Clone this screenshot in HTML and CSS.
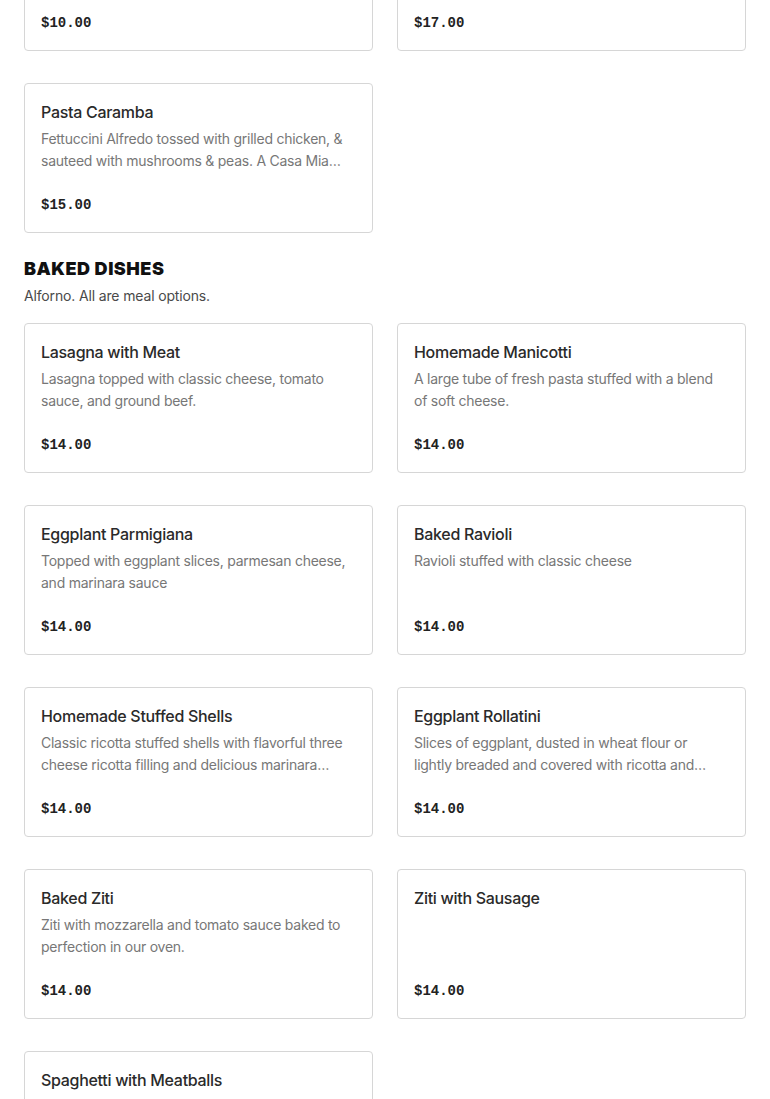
FILE: index.html
```html
<!DOCTYPE html>
<html>
<head>
<meta charset="utf-8">
<link rel="stylesheet" href="styles.css">
</head>
<body>
<main class="menu">
  <section class="section section-first">
    <div class="grid">
      <div class="card"><h3 class="title">Spaghetti Marinara</h3><p class="desc">Spaghetti tossed in our homemade marinara sauce.</p><div class="price">$10.00</div></div>
      <div class="card"><h3 class="title">Shrimp Scampi</h3><p class="desc">Shrimp sauteed in garlic, butter and white wine over linguini.</p><div class="price">$17.00</div></div>
      <div class="card"><h3 class="title">Pasta Caramba</h3><p class="desc">Fettuccini Alfredo tossed with grilled chicken, &amp; sauteed with mushrooms &amp; peas. A Casa Mia favorite served with garlic bread.</p><div class="price">$15.00</div></div>
    </div>
  </section>
  <section class="section">
    <h2 class="heading">BAKED DISHES</h2>
    <p class="caption">Alforno. All are meal options.</p>
    <div class="grid">
      <div class="card"><h3 class="title">Lasagna with Meat</h3><p class="desc">Lasagna topped with classic cheese, tomato sauce, and ground beef.</p><div class="price">$14.00</div></div>
      <div class="card"><h3 class="title">Homemade Manicotti</h3><p class="desc">A large tube of fresh pasta stuffed with a blend of soft cheese.</p><div class="price">$14.00</div></div>
      <div class="card"><h3 class="title">Eggplant Parmigiana</h3><p class="desc">Topped with eggplant slices, parmesan cheese, and marinara sauce</p><div class="price">$14.00</div></div>
      <div class="card"><h3 class="title">Baked Ravioli</h3><p class="desc">Ravioli stuffed with classic cheese</p><div class="price">$14.00</div></div>
      <div class="card"><h3 class="title">Homemade Stuffed Shells</h3><p class="desc">Classic ricotta stuffed shells with flavorful three cheese ricotta filling and delicious marinara sauce, topped with mozzarella.</p><div class="price">$14.00</div></div>
      <div class="card"><h3 class="title">Eggplant Rollatini</h3><p class="desc">Slices of eggplant, dusted in wheat flour or lightly breaded and covered with ricotta and mozzarella, baked in marinara.</p><div class="price">$14.00</div></div>
      <div class="card"><h3 class="title">Baked Ziti</h3><p class="desc">Ziti with mozzarella and tomato sauce baked to perfection in our oven.</p><div class="price">$14.00</div></div>
      <div class="card"><h3 class="title">Ziti with Sausage</h3><p class="desc"></p><div class="price">$14.00</div></div>
      <div class="card"><h3 class="title">Spaghetti with Meatballs</h3><p class="desc">Spaghetti with our homemade meatballs and marinara sauce.</p><div class="price">$14.00</div></div>
    </div>
  </section>
</main>
</body>
</html>
```

FILE: styles.css
```css
* { box-sizing: border-box; }
html, body { margin: 0; padding: 0; background: #fff; }
body { font-family: "Inter", "Liberation Sans", sans-serif; color: #222; }
.menu { padding: 0 24px; margin-top: -99px; }
.section { margin-bottom: 24px; }
.heading {
  margin: 0;
  font-size: 18px;
  line-height: 24px;
  font-weight: 900;
  color: #111;
  letter-spacing: 0.5px;
}
.caption {
  margin: 4px 0 16px;
  font-size: 14px;
  line-height: 22px;
  color: #4a4a4a;
  letter-spacing: -0.15px;
}
.grid {
  display: grid;
  grid-template-columns: 1fr 1fr;
  column-gap: 24px;
  row-gap: 32px;
}
.card {
  border: 1px solid #d6d6d6;
  border-radius: 4px;
  padding: 16px 16px 17px;
  display: flex;
  flex-direction: column;
  height: 150px;
}
.title {
  margin: 0 0 4px;
  font-size: 16px;
  line-height: 24px;
  font-weight: 500;
  color: #2a2a2a;
  letter-spacing: -0.3px;
}
.desc {
  margin: 0;
  padding-right: 5px;
  font-size: 14px;
  line-height: 22px;
  color: #777;
  letter-spacing: -0.25px;
  height: 44px;
  display: -webkit-box;
  -webkit-line-clamp: 2;
  -webkit-box-orient: vertical;
  overflow: hidden;
}
.price {
  margin-top: auto;
  font-family: "Liberation Mono", "DejaVu Sans Mono", monospace;
  font-weight: 700;
  font-size: 14px;
  line-height: 20px;
  color: #222;
}
```
